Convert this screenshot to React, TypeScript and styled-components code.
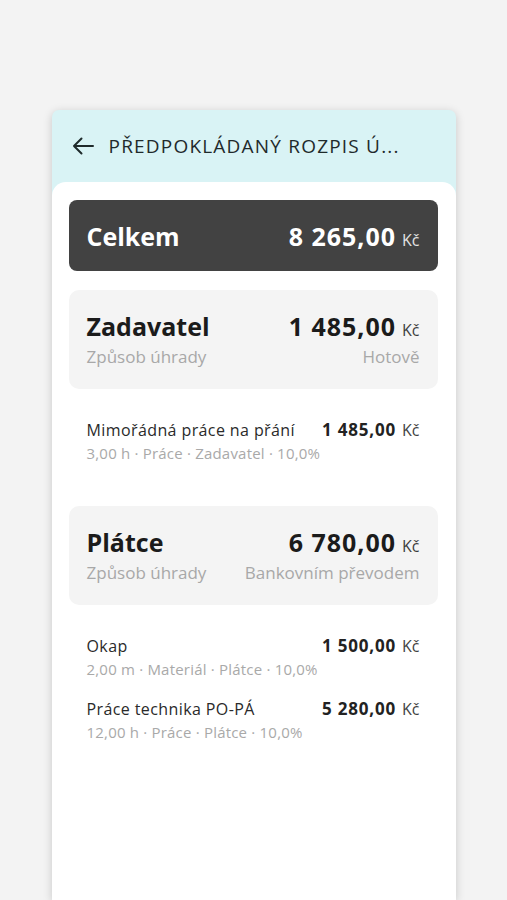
import styled, { createGlobalStyle } from "styled-components";

const Global = createGlobalStyle`
  html, body { margin: 0; padding: 0; background: #f3f3f3; }
  body { font-family: "Open Sans", "Liberation Sans", sans-serif; }
`;

const Page = styled.div`
  padding-top: 110px;
  height: 900px;
  box-sizing: border-box;
  overflow: hidden;
`;

const Phone = styled.div`
  width: 404px;
  margin: 0 auto;
  background: #d9f3f5;
  border-radius: 7px 7px 0 0;
  box-shadow: 0 2px 10px rgba(0, 0, 0, 0.18);
  min-height: 790px;
  display: flex;
  flex-direction: column;
`;

const TopBar = styled.div`
  height: 72px;
  display: flex;
  align-items: center;
  padding: 0 20px;
  gap: 15px;
  color: #1f2a2b;
`;

const Title = styled.div`
  font-size: 19px;
  letter-spacing: 1.2px;
  white-space: nowrap;
`;

const Sheet = styled.div`
  flex: 1;
  background: #fff;
  border-radius: 14px 14px 0 0;
  padding: 18px 18px 0 17px;
  display: flex;
  flex-direction: column;
`;

const Box = styled.div<{ $dark?: boolean }>`
  background: ${(p) => (p.$dark ? "#424242" : "#f4f4f4")};
  color: ${(p) => (p.$dark ? "#fff" : "#1b1b1b")};
  border-radius: ${(p) => (p.$dark ? "8px" : "10px")};
  padding: ${(p) => (p.$dark ? "0 18px" : "19px 18px 21px")};
  height: ${(p) => (p.$dark ? "71px" : "auto")};
  display: flex;
  flex-direction: column;
  justify-content: center;
  margin-bottom: ${(p) => (p.$dark ? "19px" : "0")};
`;

const Row = styled.div`
  display: flex;
  justify-content: space-between;
  align-items: baseline;
`;

const BigLabel = styled.div`
  font-size: 25px;
  font-weight: 700;
`;

const BigAmount = styled.div`
  font-size: 25px;
  font-weight: 700;
  letter-spacing: 1px;
`;

const Currency = styled.span`
  font-size: 16px;
  font-weight: 400;
  margin-left: 6px;
  letter-spacing: 0;
  opacity: 0.85;
`;

const Muted = styled.div`
  color: #a8a8a8;
  font-size: 17px;
  margin-top: 2px;
`;

const Items = styled.div<{ $gap: number }>`
  display: flex;
  flex-direction: column;
  gap: 18px;
  padding: 29px 18px 0 18px;
  margin-bottom: ${(p) => p.$gap}px;
`;

const Item = styled.div`
  display: flex;
  flex-direction: column;
`;

const ItemName = styled.div`
  font-size: 16px;
  letter-spacing: 0.4px;
  color: #2a2a2a;
`;

const ItemAmount = styled.div`
  font-size: 17px;
  font-weight: 700;
  letter-spacing: 0.8px;
  color: #222;
`;

const ItemMeta = styled.div`
  font-size: 15px;
  letter-spacing: 0.2px;
  color: #a9a9a9;
  margin-top: 2px;
`;

const BackArrow = () => (
  <svg width="22" height="18" viewBox="0 0 22 18" fill="none" stroke="#1f2a2b" strokeWidth="2" strokeLinecap="round" strokeLinejoin="round">
    <path d="M21 9H2M9.5 1.5L2 9l7.5 7.5" />
  </svg>
);

type Line = { name: string; amount: string; meta: string };

const Section = ({ title, amount, method, lines, gap }: { title: string; amount: string; method: string; lines: Line[]; gap: number }) => (
  <>
    <Box>
      <Row>
        <BigLabel>{title}</BigLabel>
        <BigAmount>{amount}<Currency>Kč</Currency></BigAmount>
      </Row>
      <Row>
        <Muted>Způsob úhrady</Muted>
        <Muted>{method}</Muted>
      </Row>
    </Box>
    <Items $gap={gap}>
      {lines.map((l) => (
        <Item key={l.name}>
          <Row>
            <ItemName>{l.name}</ItemName>
            <ItemAmount>{l.amount}<Currency>Kč</Currency></ItemAmount>
          </Row>
          <ItemMeta>{l.meta}</ItemMeta>
        </Item>
      ))}
    </Items>
  </>
);

export default function App() {
  return (
    <Page>
      <Global />
      <Phone>
        <TopBar>
          <BackArrow />
          <Title>PŘEDPOKLÁDANÝ ROZPIS Ú...</Title>
        </TopBar>
        <Sheet>
          <Box $dark>
            <Row>
              <BigLabel>Celkem</BigLabel>
              <BigAmount>8 265,00<Currency>Kč</Currency></BigAmount>
            </Row>
          </Box>
          <Section
            title="Zadavatel"
            amount="1 485,00"
            method="Hotově"
            gap={43}
            lines={[{ name: "Mimořádná práce na přání", amount: "1 485,00", meta: "3,00 h · Práce · Zadavatel · 10,0%" }]}
          />
          <Section
            title="Plátce"
            amount="6 780,00"
            method="Bankovním převodem"
            gap={0}
            lines={[
              { name: "Okap", amount: "1 500,00", meta: "2,00 m · Materiál · Plátce · 10,0%" },
              { name: "Práce technika PO-PÁ", amount: "5 280,00", meta: "12,00 h · Práce · Plátce · 10,0%" },
            ]}
          />
        </Sheet>
      </Phone>
    </Page>
  );
}
